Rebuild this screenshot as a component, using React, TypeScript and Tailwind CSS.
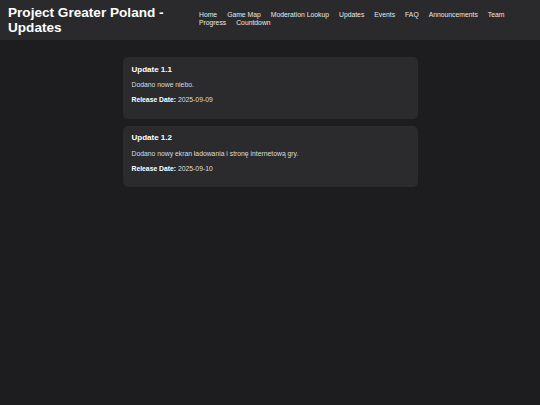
import React from 'react';

const links = ['Home', 'Game Map', 'Moderation Lookup', 'Updates', 'Events', 'FAQ', 'Announcements', 'Team Progress', 'Countdown'];

const updates = [
  { title: 'Update 1.1', text: 'Dodano nowe niebo.', date: '2025-09-09' },
  { title: 'Update 1.2', text: 'Dodano nowy ekran ładowania i stronę internetową gry.', date: '2025-09-10' },
];

export default function App() {
  return (
    <div className="min-h-screen bg-[#1d1d1f] text-white" style={{ fontFamily: '"Liberation Sans", Arial, sans-serif' }}>
      <header className="flex items-start h-[40px] px-[8px] py-[5px] bg-[#2a2a2c]">
        <h1 className="w-[181px] shrink-0 text-[13.6px] leading-[15px] font-bold text-white">
          Project Greater Poland - Updates
        </h1>
        <nav className="flex-1 ml-[10px] pt-[6px] text-[6.8px] leading-[8px] text-[#e8e8e8]">
          {links.map((l) => (
            <a key={l} href="#" className="mr-[10px] leading-[8px]">
              {l}
            </a>
          ))}
        </nav>
      </header>

      <main className="flex flex-col items-center gap-[7px] pt-[17px]">
        {updates.map((u) => (
          <div key={u.title} className="w-[295px] bg-[#2b2b2d] rounded-[5px] px-[9px] pt-[7.7px] pb-[14.6px]">
            <h2 className="text-[8px] leading-[9px] font-bold text-white">{u.title}</h2>
            <p className="mt-[7.6px] text-[6.8px] leading-[8px] text-[#dddddd]">{u.text}</p>
            <p className="mt-[6.7px] text-[6.8px] leading-[8px] text-[#dddddd]">
              <strong className="font-bold text-white">Release Date:</strong> {u.date}
            </p>
          </div>
        ))}
      </main>
    </div>
  );
}
